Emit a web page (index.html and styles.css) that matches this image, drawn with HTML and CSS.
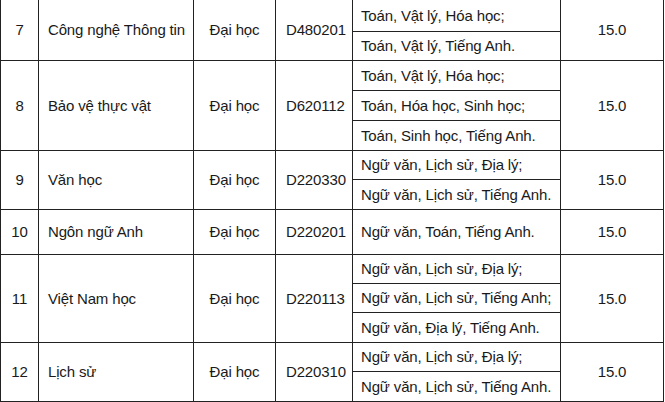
FILE: index.html
```html
<!DOCTYPE html>
<html lang="vi">
<head>
<meta charset="utf-8">
<title>Bảng điểm chuẩn</title>
<link rel="stylesheet" href="styles.css">
</head>
<body>
<table class="grid">
  <colgroup>
    <col class="c-no"><col class="c-name"><col class="c-level"><col class="c-code"><col class="c-subj"><col class="c-score">
  </colgroup>
  <tbody>
    <tr class="h31 first">
      <td rowspan="2" class="no">7</td>
      <td rowspan="2" class="name">Công nghệ Thông tin</td>
      <td rowspan="2" class="level">Đại học</td>
      <td rowspan="2" class="code">D480201</td>
      <td class="subj">Toán, Vật lý, Hóa học;</td>
      <td rowspan="2" class="score">15.0</td>
    </tr>
    <tr class="h29"><td class="subj">Toán, Vật lý, Tiếng Anh.</td></tr>

    <tr class="h30">
      <td rowspan="3" class="no">8</td>
      <td rowspan="3" class="name">Bảo vệ thực vật</td>
      <td rowspan="3" class="level">Đại học</td>
      <td rowspan="3" class="code">D620112</td>
      <td class="subj">Toán, Vật lý, Hóa học;</td>
      <td rowspan="3" class="score">15.0</td>
    </tr>
    <tr class="h30"><td class="subj">Toán, Hóa học, Sinh học;</td></tr>
    <tr class="h30"><td class="subj">Toán, Sinh học, Tiếng Anh.</td></tr>

    <tr class="h29">
      <td rowspan="2" class="no">9</td>
      <td rowspan="2" class="name">Văn học</td>
      <td rowspan="2" class="level">Đại học</td>
      <td rowspan="2" class="code">D220330</td>
      <td class="subj">Ngữ văn, Lịch sử, Địa lý;</td>
      <td rowspan="2" class="score">15.0</td>
    </tr>
    <tr class="h30"><td class="subj">Ngữ văn, Lịch sử, Tiếng Anh.</td></tr>

    <tr class="h45">
      <td class="no">10</td>
      <td class="name">Ngôn ngữ Anh</td>
      <td class="level">Đại học</td>
      <td class="code">D220201</td>
      <td class="subj">Ngữ văn, Toán, Tiếng Anh.</td>
      <td class="score">15.0</td>
    </tr>

    <tr class="h29">
      <td rowspan="3" class="no">11</td>
      <td rowspan="3" class="name">Việt Nam học</td>
      <td rowspan="3" class="level">Đại học</td>
      <td rowspan="3" class="code">D220113</td>
      <td class="subj">Ngữ văn, Lịch sử, Địa lý;</td>
      <td rowspan="3" class="score">15.0</td>
    </tr>
    <tr class="h29"><td class="subj">Ngữ văn, Lịch sử, Tiếng Anh;</td></tr>
    <tr class="h30"><td class="subj">Ngữ văn, Địa lý, Tiếng Anh.</td></tr>

    <tr class="h29">
      <td rowspan="2" class="no">12</td>
      <td rowspan="2" class="name">Lịch sử</td>
      <td rowspan="2" class="level">Đại học</td>
      <td rowspan="2" class="code">D220310</td>
      <td class="subj">Ngữ văn, Lịch sử, Địa lý;</td>
      <td rowspan="2" class="score">15.0</td>
    </tr>
    <tr class="h30"><td class="subj">Ngữ văn, Lịch sử, Tiếng Anh.</td></tr>
  </tbody>
</table>
</body>
</html>
```

FILE: styles.css
```css
html, body {
  margin: 0;
  padding: 0;
  background: #ffffff;
}

.grid {
  border-collapse: collapse;
  table-layout: fixed;
  width: 663px;
  font-family: "Liberation Sans", Arial, sans-serif;
  font-size: 15px;
  letter-spacing: -0.15px;
  color: #1a1a1a;
}

.c-no { width: 38px; }
.c-name { width: 155px; }
.c-level { width: 82px; }
.c-code { width: 77px; }
.c-subj { width: 208px; }
.c-score { width: 103px; }

.grid td {
  border: 1px solid #222222;
  padding: 0;
  vertical-align: middle;
  white-space: nowrap;
  line-height: 17px;
}

.grid tr.first td {
  border-top: none;
}

.h29 { height: 29px; }
.h30 { height: 30px; }
.h31 { height: 31px; }
.h45 { height: 45px; }

.no { text-align: center; }
.name { text-align: left; padding-left: 9px !important; }
.level { text-align: center; }
.code { text-align: left; padding-left: 10px !important; }
.subj { text-align: left; padding-left: 8px !important; }
.score { text-align: center; }
```
